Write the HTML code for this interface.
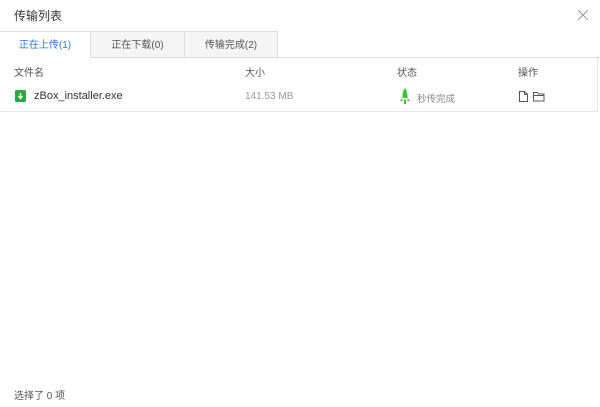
<!DOCTYPE html><html><head><style>
body{margin:0;width:600px;height:407px;background:#fff;font-family:"Liberation Sans","Noto Sans CJK SC",sans-serif;position:relative;overflow:hidden;color:#333}
.a{position:absolute;white-space:nowrap}
.tab{position:absolute;top:31px;height:27px;line-height:27px;text-align:center;font-size:10px;box-sizing:border-box}
</style></head><body>
<div class="a" style="left:14px;top:7px;font-size:12px;color:#333">传输列表</div>
<svg class="a" style="left:578px;top:10px" width="10" height="10"><path d="M0 0L10 10M10 0L0 10" stroke="#999" stroke-width="1"/></svg>
<div class="a" style="left:278px;top:57px;width:322px;height:1px;background:#ddd"></div>
<div class="tab" style="left:0;width:91px;color:#2a7ae2;background:#fff;border-top:1px solid #ddd;border-right:1px solid #ddd">正在上传(1)</div>
<div class="tab" style="left:91px;width:94px;background:#f5f5f5;border:1px solid #ddd;border-left:none;color:#555">正在下载(0)</div>
<div class="tab" style="left:185px;width:93px;background:#f5f5f5;border:1px solid #ddd;border-left:none;color:#555">传输完成(2)</div>
<div class="a" style="left:597px;top:58px;width:1px;height:54px;background:#e5e5e5"></div>
<div class="a" style="left:14px;top:64px;font-size:10px;color:#555">文件名</div>
<div class="a" style="left:245px;top:64px;font-size:10px;color:#555">大小</div>
<div class="a" style="left:397px;top:64px;font-size:10px;color:#555">状态</div>
<div class="a" style="left:518px;top:64px;font-size:10px;color:#555">操作</div>
<svg class="a" style="left:15px;top:90px" width="11" height="12"><rect width="11" height="12" rx="1.5" fill="#2aa845"/><path d="M5.5 3v5M3.5 6l2 2.5 2-2.5" stroke="#fff" stroke-width="1.4" fill="none"/></svg>
<div class="a" style="left:34px;top:90px;font-size:11px;color:#333">zBox_installer.exe</div>
<div class="a" style="left:245px;top:91px;font-size:10px;color:#999">141.53 MB</div>
<svg class="a" style="left:399px;top:88px" width="12" height="16"><path d="M6 0C3.5 3 3.5 7 3.5 10h5c0-3 0-7-2.5-10z M3.5 10L1 13h2.5z M8.5 10l2.5 3H8.5z M5 11.5h2V16H5z" fill="#3cc23c"/></svg>
<div class="a" style="left:417px;top:91px;font-size:9.5px;color:#888">秒传完成</div>
<svg class="a" style="left:519px;top:91px" width="28" height="11"><path d="M0.5 0.5h5l3 3v7h-8z M5.5 0.5v3h3" stroke="#555" fill="none"/><path d="M14.5 1.5h4l1 1.5h5.5v7h-10.5z M14.5 4.5h10.5" stroke="#555" fill="none"/></svg>
<div class="a" style="left:0;top:111px;width:598px;height:1px;background:#e5e5e5"></div>
<div class="a" style="left:14px;top:387px;font-size:10px;color:#555">选择了 0 项</div>
</body></html>
